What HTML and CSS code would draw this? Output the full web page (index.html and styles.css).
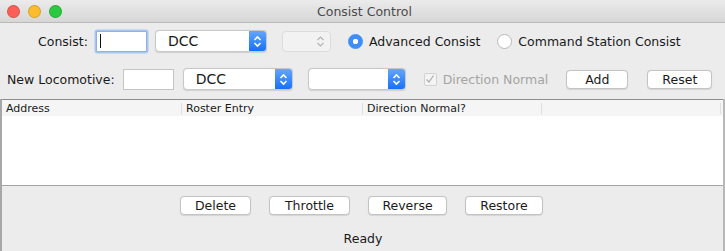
FILE: index.html
```html
<!DOCTYPE html>
<html lang="en">
<head>
    <meta charset="UTF-8">
    <title>Consist Control</title>
    <link rel="stylesheet" href="styles.css">
</head>
<body>
    <div class="window">
        <div class="titlebar">
            <div class="lights">
                <span class="light red"></span>
                <span class="light yellow"></span>
                <span class="light green"></span>
            </div>
            <div class="title">Consist Control</div>
        </div>

        <div class="row row-consist">
            <label class="label">Consist:</label>
            <div class="field focused"><span class="caret"></span></div>
            <div class="select sel-consist">
                <span class="sel-text">DCC</span>
                <span class="sel-arrow">
                    <svg width="9" height="13" viewBox="0 0 9 13"><path d="M1.5 5 L4.5 2 L7.5 5 M1.5 8 L4.5 11 L7.5 8" fill="none" stroke="#fff" stroke-width="1.6"/></svg>
                </span>
            </div>
            <div class="spinner">
                <svg width="9" height="13" viewBox="0 0 9 13"><path d="M1.5 5 L4.5 2 L7.5 5 M1.5 8 L4.5 11 L7.5 8" fill="none" stroke="#b4b4b4" stroke-width="1.2"/></svg>
            </div>
            <span class="radio checked"></span>
            <span class="opt">Advanced Consist</span>
            <span class="radio"></span>
            <span class="opt">Command Station Consist</span>
        </div>

        <div class="row row-loco">
            <label class="label">New Locomotive:</label>
            <div class="field"></div>
            <div class="select sel-loco">
                <span class="sel-text">DCC</span>
                <span class="sel-arrow">
                    <svg width="9" height="13" viewBox="0 0 9 13"><path d="M1.5 5 L4.5 2 L7.5 5 M1.5 8 L4.5 11 L7.5 8" fill="none" stroke="#fff" stroke-width="1.6"/></svg>
                </span>
            </div>
            <div class="select sel-roster">
                <span class="sel-text"></span>
                <span class="sel-arrow">
                    <svg width="9" height="13" viewBox="0 0 9 13"><path d="M1.5 5 L4.5 2 L7.5 5 M1.5 8 L4.5 11 L7.5 8" fill="none" stroke="#fff" stroke-width="1.6"/></svg>
                </span>
            </div>
            <span class="check">
                <svg width="10" height="10" viewBox="0 0 10 10"><path d="M1.5 5.5 L4 8 L8.5 1.5" fill="none" stroke="#b0b0b0" stroke-width="1.3"/></svg>
            </span>
            <span class="opt disabled">Direction Normal</span>
            <button class="btn btn-add">Add</button>
            <button class="btn btn-reset">Reset</button>
        </div>

        <div class="lower">
            <div class="table">
                <div class="thead">
                    <div class="th">Address</div>
                    <div class="th">Roster Entry</div>
                    <div class="th">Direction Normal?</div>
                    <div class="th last"></div>
                </div>
                <div class="tbody"></div>
            </div>

            <div class="actions">
                <button class="btn w-delete">Delete</button>
                <button class="btn w-throttle">Throttle</button>
                <button class="btn w-reverse">Reverse</button>
                <button class="btn w-restore">Restore</button>
            </div>

            <div class="status">Ready</div>
        </div>
    </div>
</body>
</html>
```

FILE: styles.css
```css
body {
    margin: 0;
    background: #ececec;
    font-family: "DejaVu Sans", "Liberation Sans", sans-serif;
    font-size: 12.5px;
    color: #1a1a1a;
}
.window {
    width: 725px;
    height: 251px;
    overflow: hidden;
    background: #ececec;
}
.titlebar {
    height: 22px;
    border-bottom: 1px solid #b9b9b9;
    background: linear-gradient(#ebebeb, #d6d6d6);
    position: relative;
    display: flex;
    align-items: center;
    justify-content: center;
}
.lights {
    position: absolute;
    left: 7px;
    top: 5px;
    display: flex;
    gap: 8px;
}
.light {
    width: 11px;
    height: 11px;
    border-radius: 50%;
    border: 0.5px solid rgba(0,0,0,0.15);
}
.red { background: #fc5f57; }
.yellow { background: #fdbc2e; }
.green { background: #2ac940; }
.title {
    color: #4a4a4a;
    font-size: 12.5px;
    margin-left: 4px;
}

.row {
    display: flex;
    align-items: center;
    height: 22px;
}
.row-consist {
    margin-top: 7px;
    padding-left: 38px;
}
.row-loco {
    margin-top: 16px;
    padding-left: 7px;
}
.label {
    margin-right: 8px;
}
.field {
    width: 49px;
    height: 19px;
    background: #fff;
    border: 1px solid #c4c4c4;
    display: flex;
    align-items: center;
}
.field.focused {
    border-color: #8fb1e6;
    box-shadow: 0 0 0 1.5px #a9c6f3;
    border-radius: 1px;
}
.caret {
    width: 1px;
    height: 14px;
    background: #111;
    margin-left: 3px;
}
.select {
    height: 20px;
    background: #fff;
    border: 1px solid #c8c8c8;
    border-radius: 4px;
    display: flex;
    align-items: stretch;
    box-shadow: 0 0.5px 1px rgba(0,0,0,0.12);
    overflow: hidden;
}
.sel-text {
    flex: 1;
    padding-left: 12px;
    line-height: 20px;
    font-size: 14px;
}
.sel-arrow {
    width: 17px;
    background: linear-gradient(#65a6fc, #1671f6);
    display: flex;
    align-items: center;
    justify-content: center;
}
.sel-consist {
    width: 110px;
    margin-left: 8px;
}
.sel-loco {
    width: 108px;
    margin-left: 9px;
}
.sel-roster {
    width: 96px;
    margin-left: 15px;
}
.spinner {
    height: 19px;
    width: 42px;
    margin-left: 15px;
    border: 1px solid #dcdcdc;
    border-radius: 4px;
    background: #f2f2f2;
    display: flex;
    align-items: center;
    justify-content: flex-end;
    padding-right: 5px;
}
.radio {
    width: 13px;
    height: 13px;
    border-radius: 50%;
    background: #fff;
    border: 1px solid #b8b8b8;
    margin-left: 17px;
}
.radio.checked {
    margin-left: 17px;
    border-color: #3b8df7;
    background: radial-gradient(circle, #fff 0 2.5px, #3d8ef8 3px);
}
.opt {
    margin-left: 6px;
}
.opt.disabled {
    color: #a4a4a4;
}
.check {
    width: 11px;
    height: 11px;
    margin-left: 18px;
    border: 1px solid #d2d2d2;
    border-radius: 2px;
    background: #f4f4f4;
    display: flex;
    align-items: center;
    justify-content: center;
}
.btn {
    font-family: inherit;
    font-size: 12.5px;
    height: 19px;
    padding: 0;
    background: #fff;
    border: 1px solid #c3c3c3;
    border-radius: 4px;
    box-shadow: 0 0.5px 1px rgba(0,0,0,0.1);
    color: #1a1a1a;
}
.btn-add {
    width: 62px;
    margin-left: 18px;
}
.btn-reset {
    width: 65px;
    margin-left: 19px;
}

.lower {
    margin-top: 9px;
    border-left: 2px solid #a7a7a7;
    border-right: 2px solid #b8b8b8;
    height: 160px;
}
.table {
    border-top: 1px solid #8e8e8e;
    border-bottom: 1px solid #a4a4a4;
    height: 85px;
    background: #fff;
    display: flex;
    flex-direction: column;
}
.thead {
    display: grid;
    grid-template-columns: 180px 181px 179px 1fr;
    height: 16px;
    background: #f5f5f5;
    font-size: 11px;
    align-items: center;
}
.th {
    padding-left: 4px;
    border-right: 1px solid #dedede;
    line-height: 11px;
    color: #1a1a1a;
}
.th.last {
    height: 11px;
    margin-right: 2px;
}
.tbody {
    flex: 1;
    background: #fff;
}
.actions {
    display: flex;
    justify-content: center;
    gap: 18px;
    margin-top: 10px;
    margin-right: 2px;
}
.w-delete { width: 71px; }
.w-throttle { width: 81px; }
.w-reverse { width: 79px; }
.w-restore { width: 78px; }
.status {
    text-align: center;
    margin-top: 16px;
    margin-left: 1px;
}
```
